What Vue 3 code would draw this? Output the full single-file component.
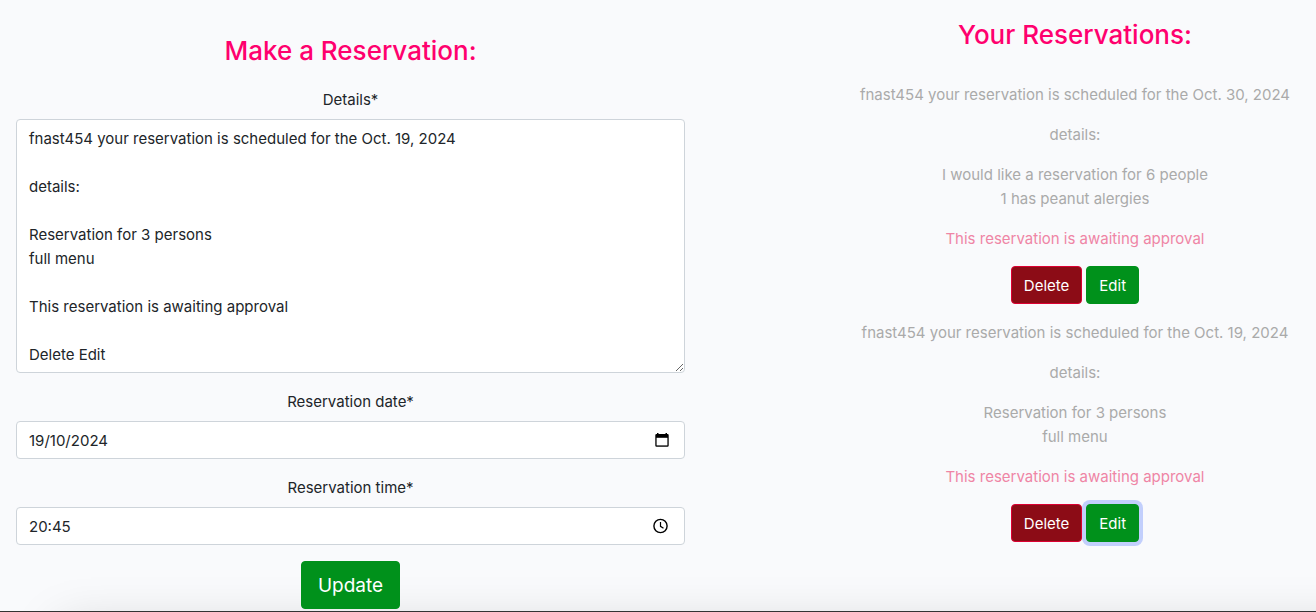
<script setup>
import { ref } from 'vue'

const details = ref(`fnast454 your reservation is scheduled for the Oct. 19, 2024

details:

Reservation for 3 persons
full menu

This reservation is awaiting approval

Delete Edit`)
const date = ref('19/10/2024')
const time = ref('20:45')

const reservations = [
  { id: 1, user: 'fnast454', date: 'Oct. 30, 2024', lines: ['I would like a reservation for 6 people', '1 has peanut alergies'], active: false },
  { id: 2, user: 'fnast454', date: 'Oct. 19, 2024', lines: ['Reservation for 3 persons', 'full menu'], active: true },
]
</script>

<template>
  <div class="page">
    <main class="content">
      <section class="editor">
        <h2>Make a Reservation:</h2>
        <form @submit.prevent>
          <div class="field">
            <label for="details">Details*</label>
            <textarea id="details" v-model="details" class="control" rows="10"></textarea>
          </div>
          <div class="field">
            <label for="date">Reservation date*</label>
            <div class="control picker">
              <input id="date" v-model="date" type="text">
              <button type="button" class="icon" aria-label="Choose date">
                <svg viewBox="0 0 16 16" width="16" height="16">
                  <path d="M3 1h1.500v1h7V1H13v1h.500q1.200 0 1.200 1.200v10.300q0 1.200-1.200 1.200h-11q-1.200 0-1.200-1.200V3.200Q1.300 2 2.500 2H3z" />
                  <path d="M2.600 5.800h10.800v7.600H2.600z" fill="#fff" />
                </svg>
              </button>
            </div>
          </div>
          <div class="field">
            <label for="time">Reservation time*</label>
            <div class="control picker">
              <input id="time" v-model="time" type="text">
              <button type="button" class="icon time" aria-label="Choose time">
                <svg viewBox="0 0 16 16" width="16" height="16" fill="none" stroke="#000">
                  <circle cx="8.500" cy="8" r="6.600" stroke-width="1.400" />
                  <path d="M8.500 4v4.300l3 1.900" stroke-width="1.200" />
                </svg>
              </button>
            </div>
          </div>
          <button type="submit" class="btn green large">Update</button>
        </form>
      </section>

      <section class="list">
        <h2>Your Reservations:</h2>
        <article v-for="item in reservations" :key="item.id">
          <p>{{ item.user }} your reservation is scheduled for the {{ item.date }}</p>
          <p>details:</p>
          <p><template v-for="(line, i) in item.lines" :key="line"><br v-if="i">{{ line }}</template></p>
          <p class="pending">This reservation is awaiting approval</p>
          <div class="actions">
            <button type="button" class="btn red">Delete</button>
            <button type="button" class="btn green" :class="{ active: item.active }">Edit</button>
          </div>
        </article>
      </section>
    </main>
    <footer class="footer"></footer>
  </div>
</template>

<style>
body {
  margin: 0;
  background: #f9fafc;
}
</style>

<style scoped>
* {
  box-sizing: border-box;
}
.page {
  height: 100vh;
  overflow: hidden;
  background: #f9fafc;
  color: #212529;
  font: 400 15px/24px Inter, "Liberation Sans", sans-serif;
  text-align: center;
}
.content {
  position: relative;
  z-index: 1;
  display: grid;
  grid-template-columns: 701fr 482fr;
  column-gap: 10.1%;
  padding-bottom: 2px;
}
.editor {
  padding: 34px 16px 0;
}
.list {
  padding-top: 18px;
}
h2 {
  margin: 0;
  color: #ff006e;
  font-size: 26px;
  font-weight: 500;
  line-height: 34px;
}
.editor h2 {
  margin-bottom: 20px;
}
.list h2 {
  margin-bottom: 31px;
}
.field {
  margin-bottom: 17px;
}
.field:last-of-type {
  margin-bottom: 16px;
}
label {
  display: block;
  margin-bottom: 7px;
}
.control {
  display: block;
  width: 100%;
  padding: 7px 12px 5px;
  border: 1px solid #ced4da;
  border-radius: 4px;
  background: #fff;
  color: #212529;
  font: inherit;
}
textarea.control {
  height: 254px;
  resize: vertical;
  overflow: hidden;
}
.picker {
  display: flex;
  align-items: center;
}
.picker input {
  flex: 1;
  min-width: 0;
  height: 24px;
  padding: 0;
  border: 0;
  outline: 0;
  background: none;
  color: inherit;
  font: inherit;
}
.icon {
  display: flex;
  padding: 0 2px 2px;
  border: 0;
  background: none;
}
.icon.time {
  padding-right: 4px;
}
.btn {
  padding: 7px 12px 5px;
  border: 1px solid;
  border-radius: 4px;
  color: #fff;
  font: inherit;
}
.green {
  border-color: #00911b;
  background: #00911b;
}
.red {
  border-color: #dc0032;
  background: #8c0c16;
}
.large {
  padding: 9px 16px 7px;
  font-size: 19px;
  line-height: 30px;
}
.active {
  box-shadow: 0 0 0 4px #c2cffc;
}
p {
  margin: 0 0 16px;
  color: #aaa;
}
.pending {
  margin-bottom: 15px;
  color: #ef85a5;
}
.actions {
  display: flex;
  justify-content: center;
  gap: 4px;
  margin-bottom: 17px;
}
.footer {
  height: 160px;
  border-top: 1px solid #333;
  background: #212529;
  box-shadow: 60px 16px 48px rgba(0, 0, 0, 0.18);
}
</style>
